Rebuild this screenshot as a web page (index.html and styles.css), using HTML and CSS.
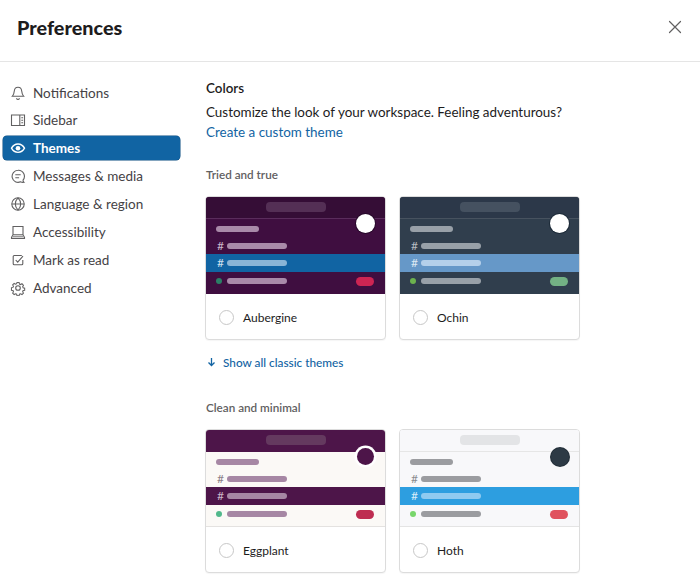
FILE: index.html
```html
<!DOCTYPE html>
<html lang="en">
<head>
<meta charset="utf-8">
<title>Preferences</title>
<link rel="stylesheet" href="styles.css">
</head>
<body>
<header class="top">
  <h1 class="title">Preferences</h1>
  <button class="close" aria-label="Close"><svg width="14" height="14" viewBox="0 0 14 14"><path d="M1.500 1.500l11 11M12.500 1.500l-11 11" stroke="#616061" stroke-width="1.200" fill="none" stroke-linecap="round"/></svg></button>
</header>
<div class="body">
  <nav class="nav">
    <a class="item"><svg class="ic" viewBox="0 0 16 16"><path d="M8 2.200c-2.300 0-3.500 1.700-3.700 3.800-.2 2.400-.6 3.800-2 5.300h11.400c-1.400-1.500-1.800-2.900-2-5.300C11.500 3.900 10.300 2.200 8 2.200zM6.500 13.300c.3.800.9 1.200 1.500 1.200s1.200-.4 1.500-1.200" fill="none" stroke="#616061" stroke-width="1.100"/></svg><span>Notifications</span></a>
    <a class="item"><svg class="ic" viewBox="0 0 16 16"><path d="M1.500 3h13v10.500h-13zM9.800 3v10.500M11.300 5.700h1.800M11.300 8.200h1.800M11.300 10.700h1.800" fill="none" stroke="#616061" stroke-width="1.100"/></svg><span>Sidebar</span></a>
    <a class="item active"><svg class="ic" viewBox="0 0 16 16"><path d="M1.500 8.200C3 5.400 5.300 4 8 4s5 1.400 6.500 4.200C13 11 10.700 12.400 8 12.400S3 11 1.500 8.200z" fill="none" stroke="#fff" stroke-width="1.400"/><circle cx="8" cy="8.200" r="2.300" fill="#fff"/></svg><span>Themes</span></a>
    <a class="item"><svg class="ic" viewBox="0 0 16 16"><path d="M8 2.300a6 6 0 1 0 2.500 11.500c1 .5 2.300.7 3.500.5-.7-.6-1-1.200-1-2.200A6 6 0 0 0 8 2.300zM5.300 6.800h5.400M5.300 9.700h3.800" fill="none" stroke="#616061" stroke-width="1.100"/></svg><span>Messages &amp; media</span></a>
    <a class="item"><svg class="ic" viewBox="0 0 16 16"><circle cx="8" cy="8" r="6.200" fill="none" stroke="#616061" stroke-width="1.100"/><path d="M1.800 8h12.400M8 1.800c-3.600 3.700-3.600 8.700 0 12.400M8 1.800c3.600 3.700 3.600 8.700 0 12.400" fill="none" stroke="#616061" stroke-width="1.100"/></svg><span>Language &amp; region</span></a>
    <a class="item"><svg class="ic" viewBox="0 0 16 16"><path d="M3 2.500h10v8.200H3zM3 10.700l-1.500 2.800v1h13v-1L13 10.700" fill="none" stroke="#616061" stroke-width="1.100"/><path d="M2 12.600h12" stroke="#9a999a" stroke-width="1.600"/></svg><span>Accessibility</span></a>
    <a class="item"><svg class="ic" viewBox="0 0 16 16"><path d="M11.800 3.500H4.200a1 1 0 0 0-1 1v7.300a1 1 0 0 0 1 1h7.600a1 1 0 0 0 1-1V8M5.700 8l2 2.200 5.300-6" fill="none" stroke="#616061" stroke-width="1.100"/></svg><span>Mark as read</span></a>
    <a class="item"><svg class="ic" viewBox="0 0 16 16"><path d="M6.800 1.800h2.400l.4 1.800 1.300.6 1.600-.9 1.700 1.700-.9 1.600.5 1.300 1.800.4v2.400l-1.800.4-.5 1.300.9 1.600-1.700 1.700-1.600-.9-1.300.5-.4 1.800H6.800l-.4-1.800-1.300-.5-1.600.9-1.700-1.700.9-1.600-.5-1.300-1.800-.4V7.900l1.800-.4.5-1.300-.9-1.600 1.700-1.700 1.600.9 1.300-.6z" transform="translate(1.100 .9) scale(.87)" fill="none" stroke="#616061" stroke-width="1.200"/><circle cx="8" cy="8" r="2.300" fill="none" stroke="#616061" stroke-width="1.100"/></svg><span>Advanced</span></a>
  </nav>
  <main class="main">
    <h2 class="heading">Colors</h2>
    <p class="intro">Customize the look of your workspace. Feeling adventurous?<br><a class="link">Create a custom theme</a></p>
    <h3 class="group first">Tried and true</h3>
    <div class="cards">
      <div class="card aubergine">
        <div class="preview">
          <div class="bar"><span class="pill"></span></div>
          <div class="row"><i class="line short"></i></div>
          <div class="row"><b class="hash">#</b><i class="line"></i></div>
          <div class="row sel"><b class="hash">#</b><i class="line"></i></div>
          <div class="row"><u class="dot"></u><i class="line"></i><em class="badge"></em></div>
          <span class="avatar"></span>
        </div>
        <label class="foot"><span class="radio"></span>Aubergine</label>
      </div>
      <div class="card ochin">
        <div class="preview">
          <div class="bar"><span class="pill"></span></div>
          <div class="row"><i class="line short"></i></div>
          <div class="row"><b class="hash">#</b><i class="line"></i></div>
          <div class="row sel"><b class="hash">#</b><i class="line"></i></div>
          <div class="row"><u class="dot"></u><i class="line"></i><em class="badge"></em></div>
          <span class="avatar"></span>
        </div>
        <label class="foot"><span class="radio"></span>Ochin</label>
      </div>
    </div>
    <a class="more"><svg width="9" height="10" viewBox="0 0 9 10"><path d="M4.500 1v7.500M1.500 5.500l3 3 3-3" fill="none" stroke="#1264a3" stroke-width="1.300"/></svg><span>Show all classic themes</span></a>
    <h3 class="group">Clean and minimal</h3>
    <div class="cards">
      <div class="card eggplant">
        <div class="preview">
          <div class="bar"><span class="pill"></span></div>
          <div class="row"><i class="line short"></i></div>
          <div class="row"><b class="hash">#</b><i class="line"></i></div>
          <div class="row sel"><b class="hash">#</b><i class="line"></i></div>
          <div class="row"><u class="dot"></u><i class="line"></i><em class="badge"></em></div>
          <span class="avatar"></span>
        </div>
        <label class="foot"><span class="radio"></span>Eggplant</label>
      </div>
      <div class="card hoth">
        <div class="preview">
          <div class="bar"><span class="pill"></span></div>
          <div class="row"><i class="line short"></i></div>
          <div class="row"><b class="hash">#</b><i class="line"></i></div>
          <div class="row sel"><b class="hash">#</b><i class="line"></i></div>
          <div class="row"><u class="dot"></u><i class="line"></i><em class="badge"></em></div>
          <span class="avatar"></span>
        </div>
        <label class="foot"><span class="radio"></span>Hoth</label>
      </div>
    </div>
  </main>
</div>
</body>
</html>
```
FILE: styles.css
```css
* { box-sizing: border-box; }
html, body { margin: 0; height: 582px; overflow: hidden; }
body { background: #fff; color: #1d1c1d; font-family: Lato, "Liberation Sans", sans-serif; }

.top { height: 62px; border-bottom: 1px solid #e5e5e5; display: flex; align-items: center; justify-content: space-between; padding: 0 18px 7px 17px; }
.title { margin: 0; font-size: 19.800px; line-height: 26px; font-weight: 900; color: #1d1c1d; }
.close { border: 0; background: none; padding: 0; width: 14px; height: 14px; display: flex; }

.body { display: flex; }
.nav { width: 205px; flex: none; padding: 18.600px 25px 0 3px; display: flex; flex-direction: column; gap: 3.900px; }
.item { height: 24px; display: flex; align-items: center; gap: 7px; padding-left: 7px; border-radius: 4px; font-size: 13.500px; color: #454245; }
.ic { width: 16px; height: 16px; flex: none; }
.item.active { background: #1164a3; color: #fff; font-weight: 700; box-shadow: 0 0 0 .5px #0b4c80; }

.main { flex: 1; padding-top: 17px; padding-left: 1px; }
.heading { margin: 0; font-size: 13.400px; line-height: 18px; font-weight: 600; color: #1d1c1d; }
.intro { margin: 5px 0 0; font-size: 13.450px; line-height: 20px; color: #1d1c1d; }
.link { color: #1264a3; }
.group { margin: 29px 0 0; font-size: 11.700px; line-height: 16px; font-weight: 600; color: #616061; }
.group.first { margin-top: 24px; }
.cards { display: flex; gap: 13px; margin: 14px 0 0 -1px; }

.card { width: 181px; height: 144px; border: 1px solid #dcdcdc; border-radius: 4px; overflow: hidden; background: #fff; box-shadow: 0 1px 1px rgba(0,0,0,.04); }
.preview { position: relative; height: 97px; display: flex; flex-direction: column; background: var(--bg); border-bottom: 1px solid var(--edge); }
.bar { height: 22px; flex: none; display: flex; justify-content: center; align-items: center; background: var(--top); border-bottom: 1px solid var(--rule); margin-bottom: 1px; }
.pill { width: 60px; height: 10px; border-radius: 4px; background: var(--pill); margin-bottom: 2px; }
.row { height: 18px; flex: none; display: flex; align-items: center; padding-left: 10px; }
.row:nth-child(2), .row:nth-child(3) { height: 17px; }
.row.sel { background: var(--sel); }
.row .line { width: 60px; height: 6px; border-radius: 3px; background: var(--line); }
.row .line.short { width: 43px; }
.row.sel .line { background: var(--sel-line); }
.hash { width: 11px; padding-left: 1px; font-size: 12px; line-height: 12px; font-weight: 400; color: var(--hash); }
.row.sel .hash { color: var(--sel-hash); }
.dot { width: 6px; height: 6px; border-radius: 50%; background: var(--dot); margin-right: 5px; }
.badge { width: 18px; height: 9px; border-radius: 5px; margin-left: auto; margin-right: 11px; background: var(--badge); }
.avatar { position: absolute; top: 17px; right: 10px; width: 19px; height: 19px; border-radius: 50%; background: var(--av); box-shadow: 0 0 0 1px var(--av-ring); }

.foot { height: 45px; display: flex; align-items: center; padding: 1px 0 0 13px; gap: 9px; font-size: 12px; font-weight: 400; color: #1d1c1d; }
.radio { width: 15px; height: 15px; border-radius: 50%; border: 1px solid #c7c7c7; background: #fff; }

.aubergine { --bg: #3f0e40; --top: #350d36; --rule: #5a2c5c; --edge: #3f0e40; --pill: #542f55; --line: #a98aa9; --hash: #c9b6c9; --sel: #1164a3; --sel-line: #8ab5d6; --sel-hash: #cfe0ed; --dot: #2b7f66; --badge: #cd2553; --av: #fff; --av-ring: #27082a; }
.ochin { --bg: #303e4d; --top: #2c3849; --rule: #47525f; --edge: #303e4d; --pill: #455160; --line: #98a0a8; --hash: #b5bbc1; --sel: #6698c8; --sel-line: #b5d0ea; --sel-hash: #dce8f3; --dot: #6cb24e; --badge: #73b184; --av: #fff; --av-ring: #1c2a38; }
.eggplant { --bg: #fbf9f6; --top: #4d1549; --rule: #4d1549; --edge: #e4e2e0; --pill: #64395f; --line: #a687a4; --hash: #8d8088; --sel: #4d1549; --sel-line: #a687a4; --sel-hash: #c9b6c6; --dot: #51b88b; --badge: #be2d51; --av: #4d1549; --av-ring: #fff; }
.hoth { --bg: #f8f8fa; --top: #f8f8fa; --rule: #e6e6e6; --edge: #e4e4e4; --pill: #e3e4e6; --line: #9b9ca0; --hash: #8c8c90; --sel: #2d9ee0; --sel-line: #8fcaf0; --sel-hash: #d5ecfa; --dot: #78d66b; --badge: #e0525e; --av: #2d3a45; --av-ring: #222e38; }
.eggplant .avatar { top: 18px; right: 11px; width: 17px; height: 17px; box-shadow: 0 0 0 2.500px #fff; }
.hoth .avatar { top: 17.500px; right: 10.500px; width: 18px; height: 18px; }

.more { display: flex; align-items: center; gap: 7px; margin-top: 14px; height: 16px; padding-left: 1px; font-size: 11.800px; font-weight: 500; color: #1264a3; }
```
